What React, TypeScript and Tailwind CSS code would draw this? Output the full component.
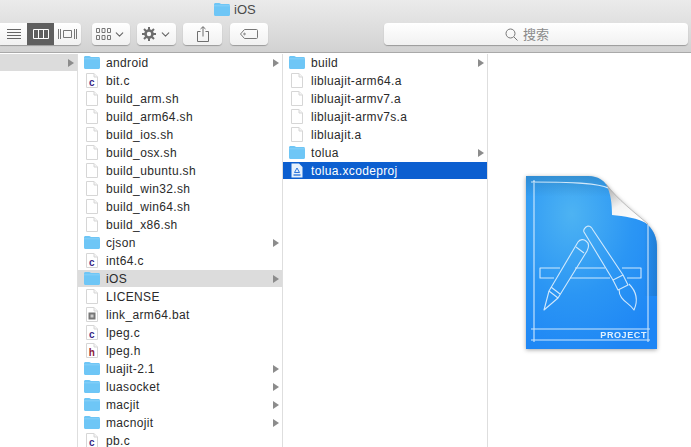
import { ChevronDown } from "lucide-react";

type Kind = "folder" | "doc" | "c" | "h" | "bat" | "proj";
type Row = { name: string; kind: Kind; state?: "open" | "selected" };

const col1: Row[] = [
  { name: "android", kind: "folder" },
  { name: "bit.c", kind: "c" },
  { name: "build_arm.sh", kind: "doc" },
  { name: "build_arm64.sh", kind: "doc" },
  { name: "build_ios.sh", kind: "doc" },
  { name: "build_osx.sh", kind: "doc" },
  { name: "build_ubuntu.sh", kind: "doc" },
  { name: "build_win32.sh", kind: "doc" },
  { name: "build_win64.sh", kind: "doc" },
  { name: "build_x86.sh", kind: "doc" },
  { name: "cjson", kind: "folder" },
  { name: "int64.c", kind: "c" },
  { name: "iOS", kind: "folder", state: "open" },
  { name: "LICENSE", kind: "doc" },
  { name: "link_arm64.bat", kind: "bat" },
  { name: "lpeg.c", kind: "c" },
  { name: "lpeg.h", kind: "h" },
  { name: "luajit-2.1", kind: "folder" },
  { name: "luasocket", kind: "folder" },
  { name: "macjit", kind: "folder" },
  { name: "macnojit", kind: "folder" },
  { name: "pb.c", kind: "c" },
];

const col2: Row[] = [
  { name: "build", kind: "folder" },
  { name: "libluajit-arm64.a", kind: "doc" },
  { name: "libluajit-armv7.a", kind: "doc" },
  { name: "libluajit-armv7s.a", kind: "doc" },
  { name: "libluajit.a", kind: "doc" },
  { name: "tolua", kind: "folder" },
  { name: "tolua.xcodeproj", kind: "proj", state: "selected" },
];

const Folder = () => (
  <svg viewBox="0 0 16 13" className="w-4 h-[13px]">
    <path d="M0 1.600C0 .7.600 0 1.500 0h3.700c.9 0 1.200 1 2.100 1h7.200c.9 0 1.500.6 1.500 1.500v9c0 .9-.6 1.500-1.500 1.500h-13C.6 13 0 12.400 0 11.500z" fill="#6ec6f6" />
    <path d="M0 2.800h16" stroke="#94d5f9" strokeWidth=".7" />
  </svg>
);

const Doc = ({ kind }: { kind: Kind }) => (
  <svg viewBox="0 0 12 15" className="w-3 h-[15px]">
    {kind === "proj" ? (
      <>
        <path d="M.5.500h7.500l3.500 3.500v10.500h-11z" fill="#e6f1fc" />
        <path d="M3.500 9.500L6 5l2.500 4.500z" fill="none" stroke="#1766d6" strokeWidth=".9" />
        <path d="M2.500 12h7" stroke="#1766d6" strokeWidth="1.200" />
      </>
    ) : (
      <>
        <path d="M.5.500h7.500l3.500 3.500v10.500h-11z" fill="#fff" stroke="#d6d6d6" />
        <path d="M8 .5v3.500h3.500" fill="#f4f4f4" stroke="#d6d6d6" />
      </>
    )}
    {kind === "c" && <text x="6" y="13" textAnchor="middle" fontSize="10" fontWeight="700" fontFamily="'Liberation Sans', sans-serif" fill="#3b2a86">c</text>}
    {kind === "h" && <text x="6" y="13" textAnchor="middle" fontSize="10" fontWeight="700" fontFamily="'Liberation Sans', sans-serif" fill="#8a1c3c">h</text>}
    {kind === "bat" && (
      <>
        <rect x="2.500" y="5.500" width="7" height="7" fill="#777" />
        <rect x="4.500" y="7.500" width="3" height="3" fill="#ccc" />
      </>
    )}
  </svg>
);

const Arrow = () => (
  <svg viewBox="0 0 6 8" className="w-[6px] h-2 shrink-0">
    <path d="M0 0l6 4-6 4z" fill="#8c8c8c" />
  </svg>
);

const FileRow = ({ row }: { row: Row }) => {
  const bg = row.state === "open" ? "bg-[#dcdcdc] text-[#2a2a2a]" : row.state === "selected" ? "bg-[#0c5fd0] text-white" : "text-[#2a2a2a]";
  return (
    <div className={`h-[17px] mb-px flex items-center pl-[6px] pr-[3px] ${bg}`}>
      <span className="w-4 flex justify-center shrink-0">
        {row.kind === "folder" ? <Folder /> : <Doc kind={row.kind} />}
      </span>
      <span className="ml-[6px] flex-1 truncate">{row.name}</span>
      {row.kind === "folder" && <Arrow />}
    </div>
  );
};

const Btn = ({ className, children }: { className: string; children: React.ReactNode }) => (
  <div className={`h-[22px] flex items-center justify-center rounded-[4px] bg-gradient-to-b from-white to-[#f1f1f1] shadow-[0_1px_1px_rgba(0,0,0,0.28)] ${className}`}>
    {children}
  </div>
);

const ProjectIcon = () => (
  <svg viewBox="0 0 132 173" className="w-[132px] h-[173px]">
    <defs>
      <radialGradient id="blue" cx="0.35" cy="0.22" r="0.85">
        <stop offset="0" stopColor="#4db3f3" />
        <stop offset="0.55" stopColor="#2b96f4" />
        <stop offset="1" stopColor="#1e86f5" />
      </radialGradient>
      <linearGradient id="edge" x1="0" y1="0" x2="0" y2="1">
        <stop offset="0" stopColor="#2f80b8" stopOpacity="0.55" />
        <stop offset="0.12" stopColor="#2f80b8" stopOpacity="0" />
      </linearGradient>
      <linearGradient id="edgeRight" x1="0" y1="0" x2="1" y2="0">
        <stop offset="0.7" stopColor="#1f6fb5" stopOpacity="0" />
        <stop offset="1" stopColor="#1f6fb5" stopOpacity="0.5" />
      </linearGradient>
      <linearGradient id="curl" x1="0.1" y1="0" x2="0.7" y2="1">
        <stop offset="0" stopColor="#a9a9a9" />
        <stop offset="0.5" stopColor="#f4f4f4" />
        <stop offset="1" stopColor="#ffffff" />
      </linearGradient>
    </defs>
    <path d="M0 0H62C72 0 80 5 84 15C87 22 86 32 86 39C100 39 114 41 122 49C128 55 131 62 131 72V173H0Z" fill="url(#blue)" />
    <path d="M0 0H62C72 0 80 5 84 15C87 22 86 32 86 39C100 39 114 41 122 49C128 55 131 62 131 72V173H0Z" fill="url(#edge)" />
    <path d="M86 39C100 39 114 41 122 49C128 55 131 62 131 72V120H110V42Z" fill="url(#edgeRight)" />
    <path d="M80 8C92 24 108 36 122 48C112 42 98 40 86 39C86 28 85 18 80 8Z" fill="url(#curl)" />
    <path d="M80 8C92 24 108 36 122 48" fill="none" stroke="#9a9a9a" strokeWidth=".8" opacity=".7" />
    <g fill="none" stroke="#e2f1fd" strokeWidth="1.100" strokeLinejoin="round" opacity="0.9">
      <path d="M5 6C30 6 70 6 82 12M8 4V166M5 153H124M5 164H124M122 49V166" />
      <path d="M34 92H14V102H28M49 92H79M44 102H84M96 92H115V102H101" />
      <path d="M18 134L23 115L52 66C54 63 58 63 60 65C63 67 63 71 61 75L32 122Z" />
      <path d="M23 115L32 122M25 111L34 118M50 71L58 77" />
      <path d="M58 56C57 54 59 51 62 50C65 50 66 52 67 54L97 99L87 104Z" />
      <path d="M87 104L92 114L102 109L97 99" />
      <path d="M93 113C93 125 103 126 108 134C112 125 111 116 103 108" />
    </g>
    <text x="121" y="162" textAnchor="end" fontSize="9" fontWeight="700" letterSpacing=".6" fontFamily="'Liberation Sans', sans-serif" fill="#e2f1fd">PROJECT</text>
  </svg>
);

export default function App() {
  return (
    <div className="w-[691px] h-[447px] overflow-hidden flex flex-col bg-white font-['Liberation_Sans',sans-serif] text-[12px] tracking-[0.35px]">
      <header className="h-[53px] shrink-0 border-b border-[#a9a9a9] bg-gradient-to-b from-[#ebebeb] to-[#d2d2d2] flex flex-col">
        <div className="h-[19px] flex items-center pl-[214px] text-[#4a4a4a] gap-[4px]">
          <Folder />
          <span className="text-[13px] tracking-normal">iOS</span>
        </div>
        <div className="flex items-center mt-[4px] h-[22px]">
          <div className="flex h-[22px] w-[81px] rounded-r-[4px] overflow-hidden shadow-[0_1px_1px_rgba(0,0,0,0.28)] bg-gradient-to-b from-white to-[#f1f1f1]">
            <div className="w-[27px] flex items-center justify-center">
              <svg viewBox="0 0 14 10" className="w-[14px] h-[10px]" stroke="#666"><path d="M0 .5h14M0 3.500h14M0 6.500h14M0 9.500h14" /></svg>
            </div>
            <div className="w-[27px] flex items-center justify-center bg-[#5f5f5f]">
              <svg viewBox="0 0 16 10" className="w-4 h-[10px]" fill="none" stroke="#fff"><path d="M.5.500h15v9H.5zM5.500.500v9M10.500.500v9" /></svg>
            </div>
            <div className="flex-1 flex items-center justify-center">
              <svg viewBox="0 0 19 10" className="w-[19px] h-[10px]" fill="none" stroke="#777"><path d="M.5 0v10M2.500 0v10M5.500 1.500h8v7h-8zM16.500 0v10M18.500 0v10" /></svg>
            </div>
          </div>
          <Btn className="w-[38px] ml-[11px] gap-[2px]">
            <svg viewBox="0 0 15 12" className="w-[15px] h-3" fill="none" stroke="#777">
              <path d="M.5.500h3v4h-3zM6 .5h3v4h-3zM11.500.500h3v4h-3zM.5 7.500h3v4h-3zM6 7.500h3v4h-3zM11.500 7.500h3v4h-3z" />
            </svg>
            <ChevronDown size={13} strokeWidth={2} color="#666" />
          </Btn>
          <Btn className="w-[39px] ml-[7px] gap-[3px]">
            <svg viewBox="0 0 14 14" className="w-[14px] h-[14px]">
              <circle cx="7" cy="7" r="3.500" fill="none" stroke="#6c6c6c" strokeWidth="2.600" />
              <path d="M7 0v3M7 11v3M0 7h3M11 7h3M2 2l2 2M10 10l2 2M12 2l-2 2M4 10l-2 2" stroke="#6c6c6c" strokeWidth="2" />
            </svg>
            <ChevronDown size={13} strokeWidth={2} color="#666" />
          </Btn>
          <Btn className="w-[39px] ml-[7px]">
            <svg viewBox="0 0 12 16" className="w-3 h-4" fill="none" stroke="#6f6f6f">
              <path d="M3.500 5.500H.5v10h11v-10H8.500M6 10.500V.8M3.500 3L6 .7 8.500 3" />
            </svg>
          </Btn>
          <Btn className="w-[38px] ml-[8px]">
            <svg viewBox="0 0 18 10" className="w-[18px] h-[10px]" fill="none" stroke="#777">
              <path d="M4.500.5h12c.6 0 1 .4 1 1v7c0 .6-.4 1-1 1h-12L.5 5z" />
              <circle cx="4.500" cy="5" r=".8" />
            </svg>
          </Btn>
          <Btn className="w-[304px] ml-[116px] pr-[18px] gap-[5px] text-[#8a8a8a]">
            <svg viewBox="0 0 13 13" className="w-[13px] h-[13px]" fill="none" stroke="#777">
              <circle cx="5.500" cy="5.500" r="4.500" />
              <path d="M9 9l3.500 3.500" />
            </svg>
            <span className="font-['Noto_Sans_CJK_SC',sans-serif] text-[13px] tracking-normal">搜索</span>
          </Btn>
        </div>
      </header>
      <main className="flex-1 flex min-h-0 pt-px">
        <section className="w-[78px] shrink-0 border-r border-[#dedede]">
          <div className="h-[17px] bg-[#dcdcdc] flex items-center justify-end pr-[3px]">
            <Arrow />
          </div>
        </section>
        <section className="w-[205px] shrink-0 border-r border-[#dedede] overflow-hidden">
          {col1.map((r) => <FileRow key={r.name} row={r} />)}
        </section>
        <section className="w-[205px] shrink-0 border-r border-[#dedede]">
          {col2.map((r) => <FileRow key={r.name} row={r} />)}
        </section>
        <section className="flex-1 flex justify-center pt-[122px] pl-[4px]">
          <div className="h-[173px] drop-shadow-[0_1px_2px_rgba(0,0,0,0.35)]">
            <ProjectIcon />
          </div>
        </section>
      </main>
    </div>
  );
}
